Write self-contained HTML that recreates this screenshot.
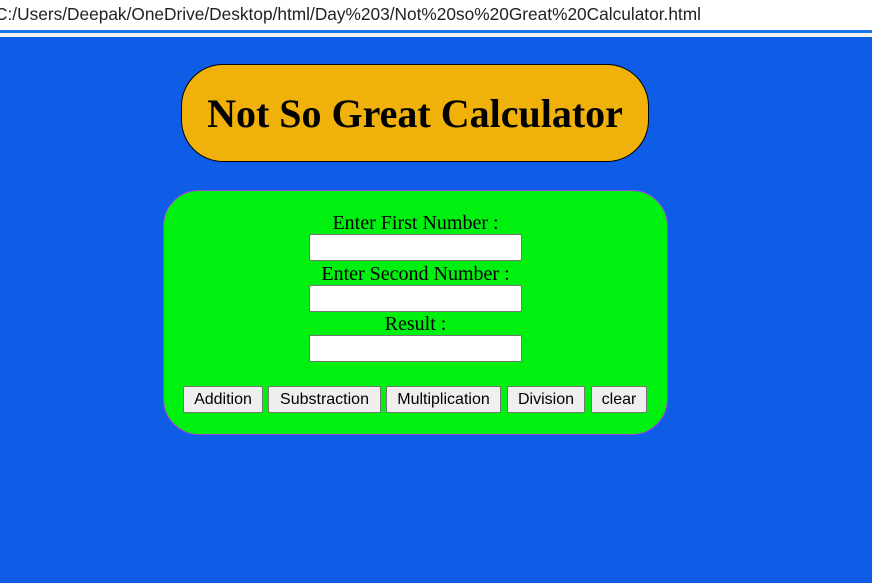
<!DOCTYPE html>
<html><head><meta charset="utf-8"><style>
*{margin:0;padding:0;box-sizing:border-box}
body{width:872px;height:583px;overflow:hidden;background:#0f5ce6;position:relative;font-family:"Liberation Serif",serif}
#bar{position:absolute;left:0;top:0;width:872px;height:30px;background:#fff;font-family:"Liberation Sans",sans-serif;font-size:17.3px;color:#222;line-height:28px;white-space:nowrap;text-indent:-5px}
#line{position:absolute;left:0;top:30px;width:872px;height:3px;background:#1a73e8}
#gap{position:absolute;left:0;top:33px;width:872px;height:4px;background:#f2f2f2}
#title{position:absolute;left:181px;top:64px;width:468px;height:98px;background:#f0b20a;border:1px solid #000;border-radius:42px;text-align:center;font-weight:bold;font-size:40px;line-height:98px}
#box{position:absolute;left:163px;top:190px;width:505px;height:245px;background:#00f010;border:1px solid #a040e0;border-radius:36px}
.lbl{position:absolute;left:0;width:100%;text-align:center;font-size:20px;line-height:22px}
.in{position:absolute;left:145px;width:213px;height:27px;background:#fff;border:1px solid #767676;border-radius:2px}
.btn{position:absolute;top:195px;height:27px;background:#efefef;border:1px solid #767676;border-radius:2px;font-family:"Liberation Sans",sans-serif;font-size:16px;text-align:center;line-height:25px;color:#000}
</style></head><body>
<div id="bar">C:/Users/Deepak/OneDrive/Desktop/html/Day%203/Not%20so%20Great%20Calculator.html</div>
<div id="line"></div><div id="gap"></div>
<div id="title">Not So Great Calculator</div>
<div id="box">
<div class="lbl" style="top:21px">Enter First Number :</div>
<div class="in" style="top:43px"></div>
<div class="lbl" style="top:72px">Enter Second Number :</div>
<div class="in" style="top:94px"></div>
<div class="lbl" style="top:122px">Result :</div>
<div class="in" style="top:144px"></div>
<div class="btn" style="left:19px;width:80px">Addition</div>
<div class="btn" style="left:104px;width:113px">Substraction</div>
<div class="btn" style="left:222px;width:115px">Multiplication</div>
<div class="btn" style="left:343px;width:78px">Division</div>
<div class="btn" style="left:427px;width:56px">clear</div>
</div>
</body></html>
